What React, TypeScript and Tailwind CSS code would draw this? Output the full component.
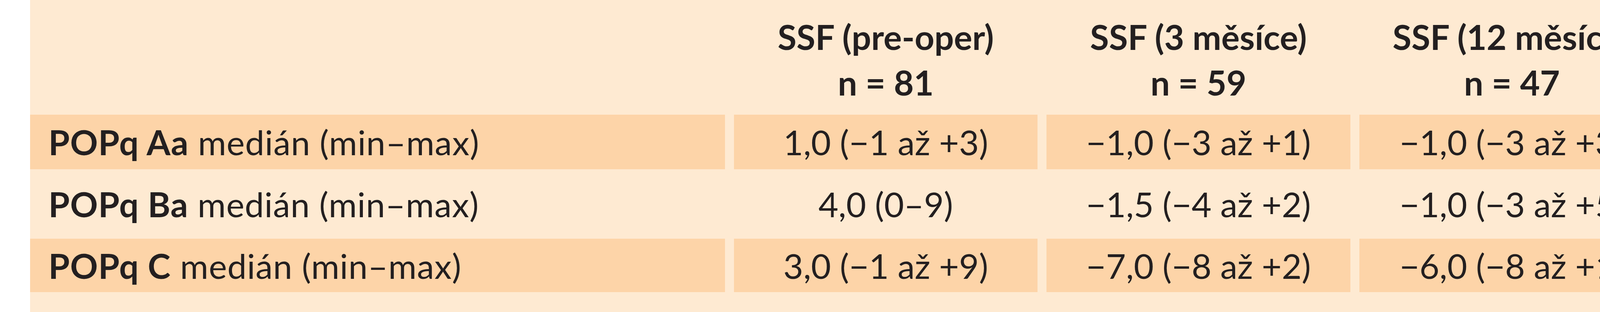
import React from "react";

const headers = [
  ["SSF (pre-oper)", "n = 81"],
  ["SSF (3 měsíce)", "n = 59"],
  ["SSF (12 měsíců)", "n = 47"],
  ["SSF (24 měsíců)", "n = 30"],
];

const rows = [
  {
    bold: "POPq Aa",
    vals: ["1,0 (−1 až +3)", "−1,0 (−3 až +1)", "−1,0 (−3 až +3)", "−1,0 (−3 až +2)", "< 0,0001"],
    dark: true,
    h: "h-[140px]",
  },
  {
    bold: "POPq Ba",
    vals: ["4,0 (0–9)", "−1,5 (−4 až +2)", "−1,0 (−3 až +5)", "0,0 (−2 až +4)", "< 0,0001"],
    dark: false,
    h: "h-[178px]",
  },
  {
    bold: "POPq C",
    vals: ["3,0 (−1 až +9)", "−7,0 (−8 až +2)", "−6,0 (−8 až +1)", "−5,5 (−9 až +1)", "< 0,0001"],
    dark: true,
    h: "h-[137px]",
  },
];

const grid =
  "grid grid-cols-[1779px_777px_778px_781px_779px_554px] gap-x-[23px]";

export default function App() {
  return (
    <div className="w-[5782px] h-[800px] bg-white flex font-['Lato',sans-serif] text-[#231f20] text-[88px]">
      <div className="ml-[77px] w-[5566px] h-[800px] bg-[#feead2] pr-[3px] flex flex-col shrink-0">
        <div className={`${grid} h-[294px]`}>
          <div />
          {headers.map((h) => (
            <div key={h[0]} className="flex flex-col items-center justify-center pt-[12px] font-bold leading-[117px] text-center whitespace-nowrap">
              <span>{h[0]}</span>
              <span>{h[1]}</span>
            </div>
          ))}
          <div className="flex items-center justify-center pt-[16px] font-bold">p</div>
        </div>
        {rows.map((r) => (
          <div key={r.bold} className={`${grid} ${r.h}`}>
            <div className={`flex items-center pl-[47px] whitespace-nowrap tracking-[1px] ${r.dark ? "bg-[#fdd4a8]" : ""}`}>
              <span className="font-bold">{r.bold}</span>
              <span>&nbsp;medián (min–max)</span>
            </div>
            {r.vals.map((v, i) => (
              <div key={i} className={`flex items-center justify-center whitespace-nowrap ${r.dark ? "bg-[#fdd4a8]" : ""}`}>
                {v}
              </div>
            ))}
          </div>
        ))}
      </div>
    </div>
  );
}
